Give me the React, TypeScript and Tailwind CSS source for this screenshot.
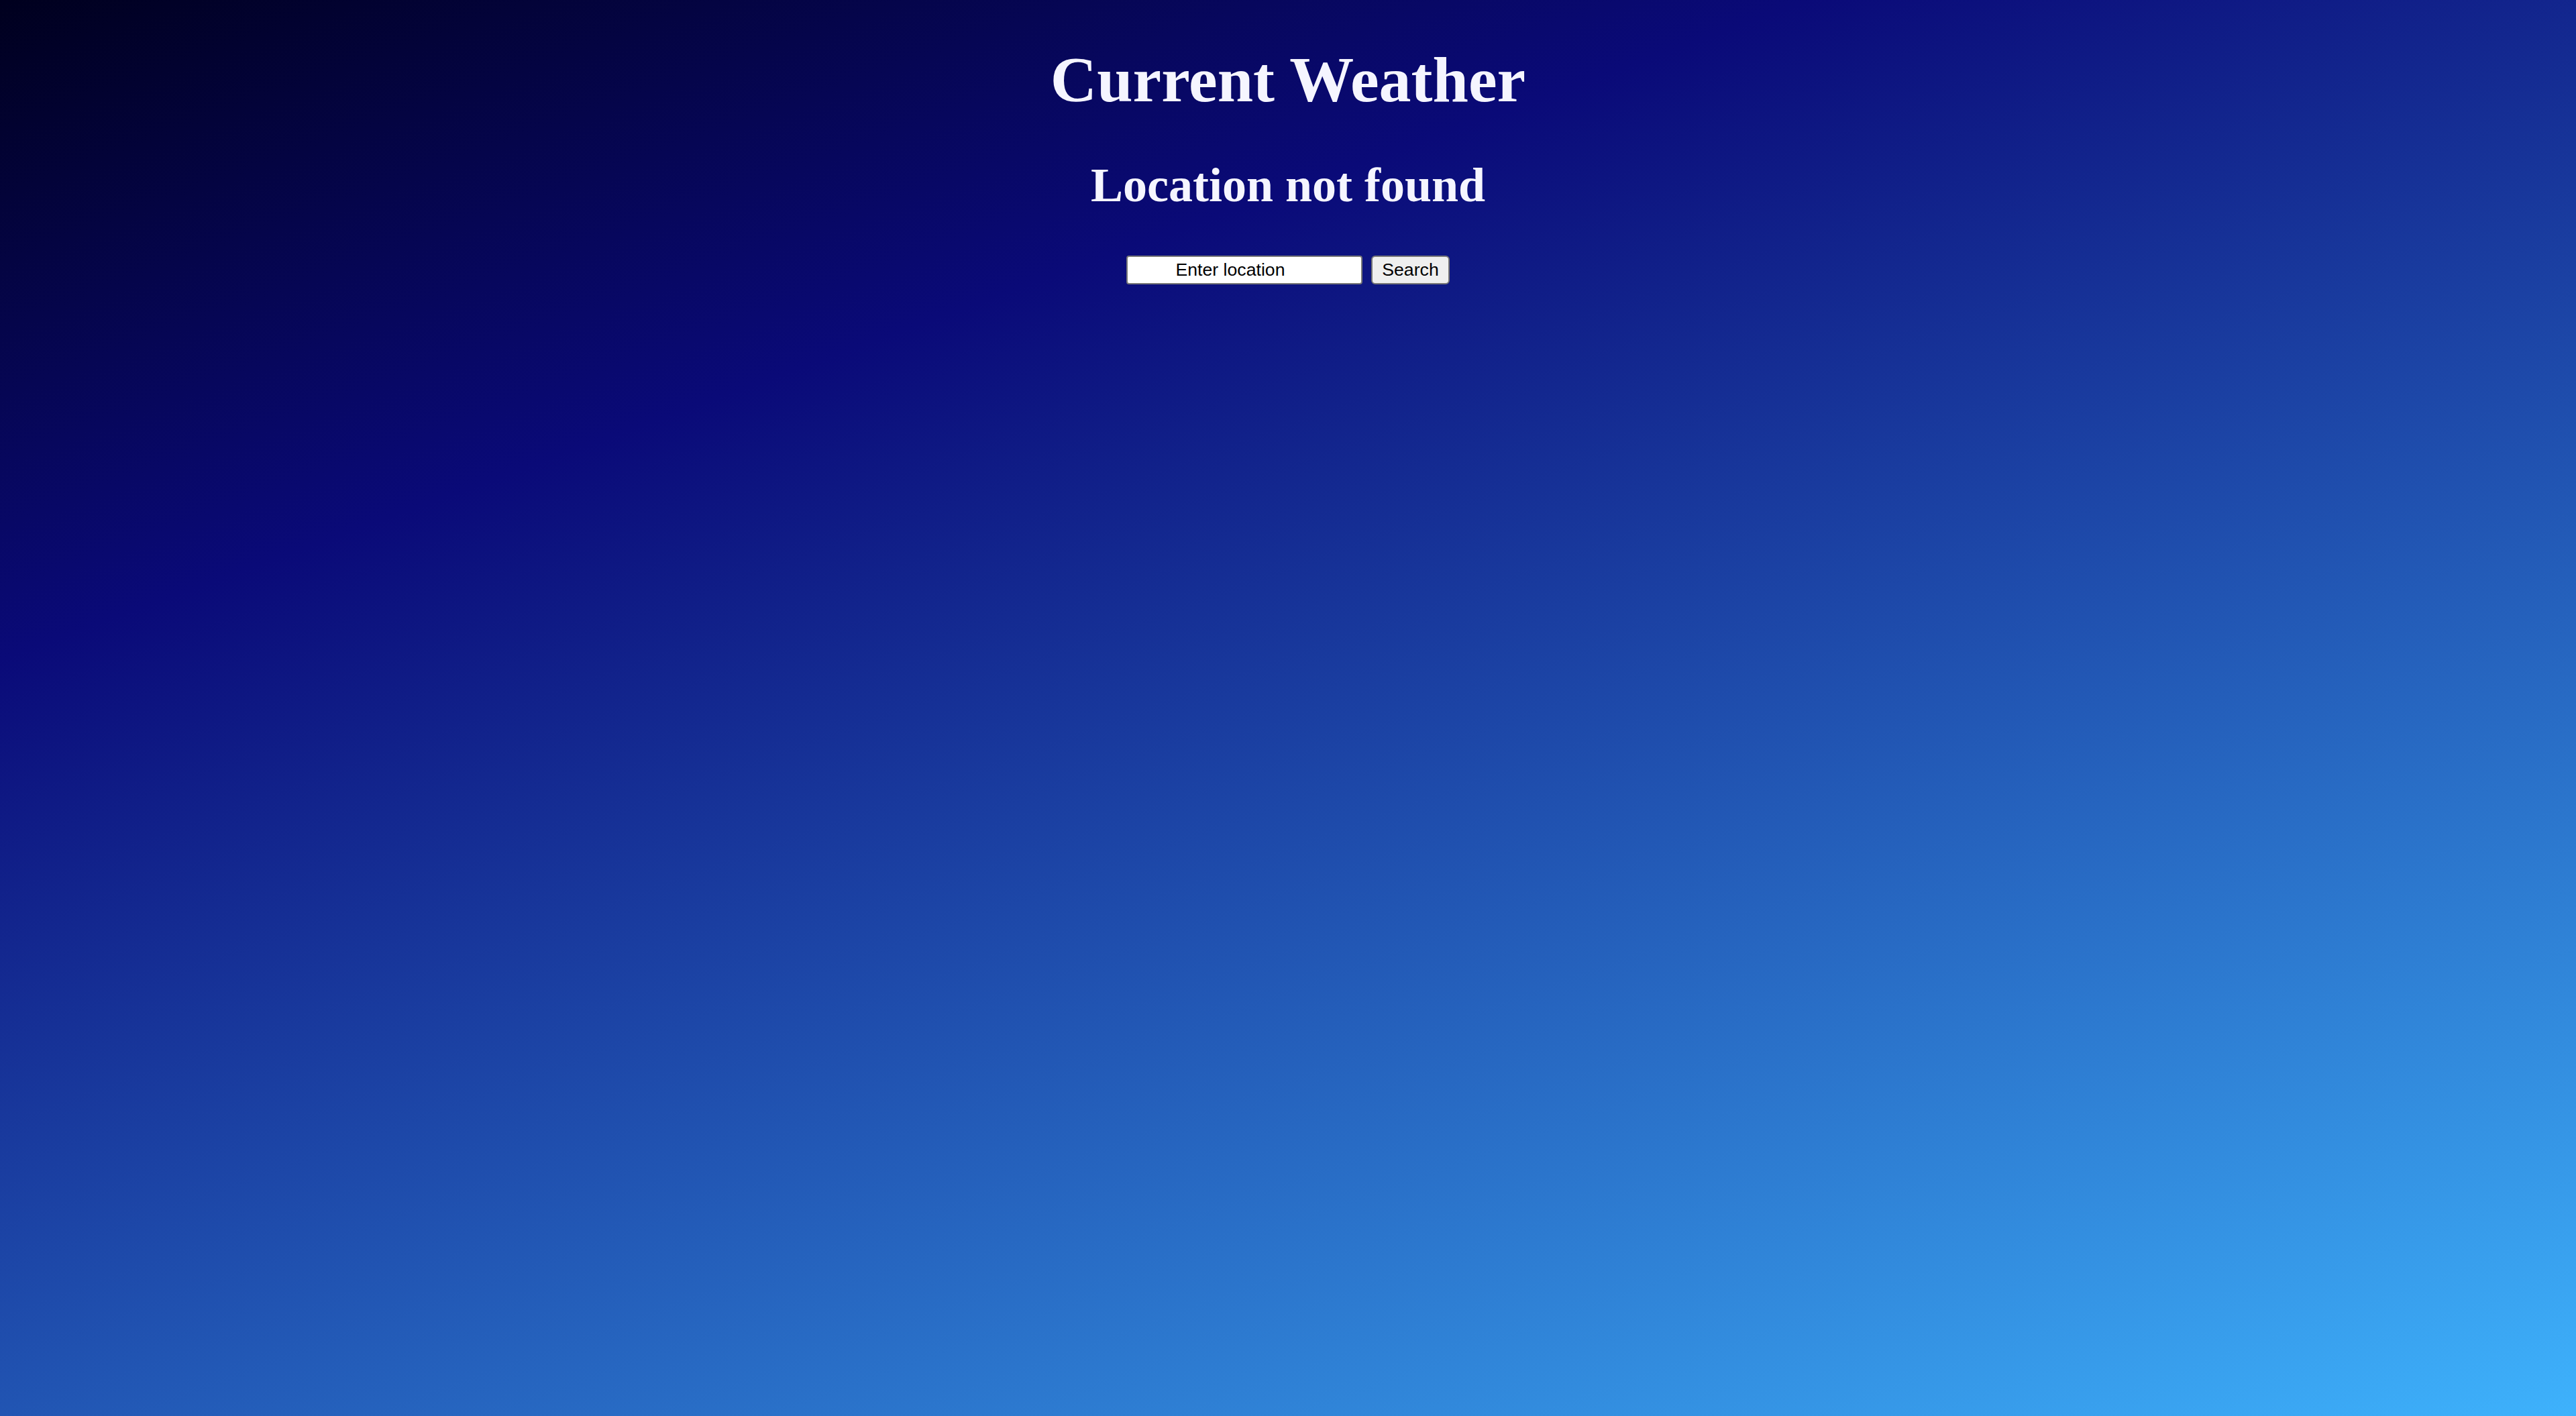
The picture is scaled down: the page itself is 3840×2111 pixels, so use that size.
import { useState } from 'react';

export default function App() {
	const [location, setLocation] = useState('');

	return (
		<div className="min-h-screen w-full bg-[linear-gradient(160deg,#00001e_0%,#0a0a78_28%,#3eb2fc_100%)] text-[#f5f5ff] font-['Liberation_Serif','Times_New_Roman',serif]">
			<div className="flex flex-col items-center pt-[66px]">
				{/* Title */}
				<h1 className="text-[96px] leading-[106px] font-bold">Current Weather</h1>

				{/* Status */}
				<h2 className="mt-[64px] text-[72px] leading-[80px] font-bold">Location not found</h2>

				{/* Search row */}
				<form
					className="mt-[65px] flex items-center gap-[13px]"
					onSubmit={(e) => e.preventDefault()}
				>
					<input
						type="text"
						value={location}
						onChange={(e) => setLocation(e.target.value)}
						placeholder="Enter location"
						className="w-[352px] h-[43px] bg-white border-2 border-[#767676] rounded-[4px] pl-[4px] pr-[46px] text-center text-[26.67px] text-black placeholder:text-black font-['Liberation_Sans',Arial,sans-serif] outline-none"
					/>
					<button
						type="submit"
						className="w-[117px] h-[43px] bg-[#efefef] border-2 border-[#767676] rounded-[6px] text-[26.67px] text-black font-['Liberation_Sans',Arial,sans-serif] leading-none"
					>
						Search
					</button>
				</form>
			</div>
		</div>
	);
}
